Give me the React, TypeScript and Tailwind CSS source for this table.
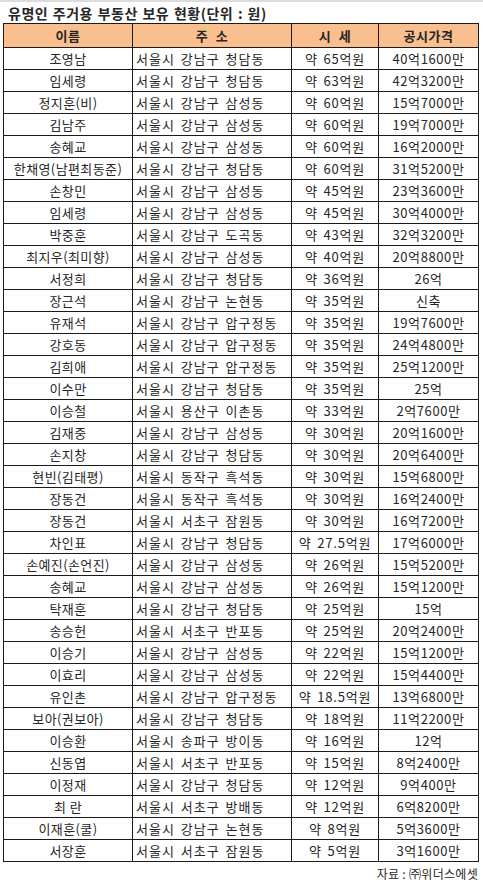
const rows: [string, string, string, string][] = [
  ["조영남", "서울시 강남구 청담동", "약 65억원", "40억1600만"],
  ["임세령", "서울시 강남구 청담동", "약 63억원", "42억3200만"],
  ["정지훈(비)", "서울시 강남구 삼성동", "약 60억원", "15억7000만"],
  ["김남주", "서울시 강남구 삼성동", "약 60억원", "19억7000만"],
  ["송혜교", "서울시 강남구 삼성동", "약 60억원", "16억2000만"],
  ["한채영(남편최동준)", "서울시 강남구 청담동", "약 60억원", "31억5200만"],
  ["손창민", "서울시 강남구 삼성동", "약 45억원", "23억3600만"],
  ["임세령", "서울시 강남구 삼성동", "약 45억원", "30억4000만"],
  ["박중훈", "서울시 강남구 도곡동", "약 43억원", "32억3200만"],
  ["최지우(최미향)", "서울시 강남구 삼성동", "약 40억원", "20억8800만"],
  ["서정희", "서울시 강남구 청담동", "약 36억원", "26억"],
  ["장근석", "서울시 강남구 논현동", "약 35억원", "신축"],
  ["유재석", "서울시 강남구 압구정동", "약 35억원", "19억7600만"],
  ["강호동", "서울시 강남구 압구정동", "약 35억원", "24억4800만"],
  ["김희애", "서울시 강남구 압구정동", "약 35억원", "25억1200만"],
  ["이수만", "서울시 강남구 청담동", "약 35억원", "25억"],
  ["이승철", "서울시 용산구 이촌동", "약 33억원", "2억7600만"],
  ["김재중", "서울시 강남구 삼성동", "약 30억원", "20억1600만"],
  ["손지창", "서울시 강남구 청담동", "약 30억원", "20억6400만"],
  ["현빈(김태평)", "서울시 동작구 흑석동", "약 30억원", "15억6800만"],
  ["장동건", "서울시 동작구 흑석동", "약 30억원", "16억2400만"],
  ["장동건", "서울시 서초구 잠원동", "약 30억원", "16억7200만"],
  ["차인표", "서울시 강남구 청담동", "약 27.5억원", "17억6000만"],
  ["손예진(손언진)", "서울시 강남구 삼성동", "약 26억원", "15억5200만"],
  ["송혜교", "서울시 강남구 삼성동", "약 26억원", "15억1200만"],
  ["탁재훈", "서울시 강남구 청담동", "약 25억원", "15억"],
  ["송승헌", "서울시 서초구 반포동", "약 25억원", "20억2400만"],
  ["이승기", "서울시 강남구 삼성동", "약 22억원", "15억1200만"],
  ["이효리", "서울시 강남구 삼성동", "약 22억원", "15억4400만"],
  ["유인촌", "서울시 강남구 압구정동", "약 18.5억원", "13억6800만"],
  ["보아(권보아)", "서울시 강남구 청담동", "약 18억원", "11억2200만"],
  ["이승환", "서울시 송파구 방이동", "약 16억원", "12억"],
  ["신동엽", "서울시 서초구 반포동", "약 15억원", "8억2400만"],
  ["이정재", "서울시 강남구 청담동", "약 12억원", "9억400만"],
  ["최 란", "서울시 서초구 방배동", "약 12억원", "6억8200만"],
  ["이재훈(쿨)", "서울시 강남구 논현동", "약 8억원", "5억3600만"],
  ["서장훈", "서울시 서초구 잠원동", "약 5억원", "3억1600만"],
];

const font = { fontFamily: '"Noto Sans CJK KR", "Noto Sans", sans-serif' };

export default function App() {
  return (
    <div className="w-[483px] h-[884px] bg-white text-[#262626] overflow-hidden" style={font}>
      <div className="h-[2px] bg-[#dcdcdc]" />
      <div className="pl-[8px] h-[21px] flex items-center text-[14px] font-bold leading-none tracking-[0.5px] [word-spacing:1px]">
        유명인 주거용 부동산 보유 현황(단위 : 원)
      </div>
      <div className="ml-[3px] w-[476px] border border-[#1a1a1a]">
        <div className="grid grid-cols-[129px_159px_87px_99px] h-[24px] bg-[#fabf8f] border-b border-[#1a1a1a] text-[13px] font-bold tracking-[0.5px]">
          <div className="border-r border-[#1a1a1a] flex items-center justify-center">이름</div>
          <div className="border-r border-[#1a1a1a] flex items-center justify-center [word-spacing:4px]">주 소</div>
          <div className="border-r border-[#1a1a1a] flex items-center justify-center [word-spacing:4px]">시 세</div>
          <div className="flex items-center justify-center">공시가격</div>
        </div>
        {rows.map((r, i) => (
          <div
            key={i}
            className={
              "grid grid-cols-[129px_159px_87px_99px] text-[13px] leading-none " +
              (i === rows.length - 1 ? "h-[21px]" : "h-[22px] border-b border-[#1a1a1a]")
            }
          >
            <div className="border-r border-[#1a1a1a] flex items-center justify-center whitespace-nowrap tracking-[0.4px]">{r[0]}</div>
            <div className="border-r border-[#1a1a1a] flex items-center pl-[3px] whitespace-nowrap tracking-[1px] [word-spacing:2px]">{r[1]}</div>
            <div className="border-r border-[#1a1a1a] flex items-center justify-center whitespace-nowrap tracking-[0.8px] [word-spacing:2px]">{r[2]}</div>
            <div className="flex items-center justify-center whitespace-nowrap tracking-[0.6px]">{r[3]}</div>
          </div>
        ))}
      </div>
      <div className="w-[478px] flex justify-end pt-[6px] text-[12px] leading-none tracking-[0.3px]">자료 : ㈜위더스에셋</div>
    </div>
  );
}
